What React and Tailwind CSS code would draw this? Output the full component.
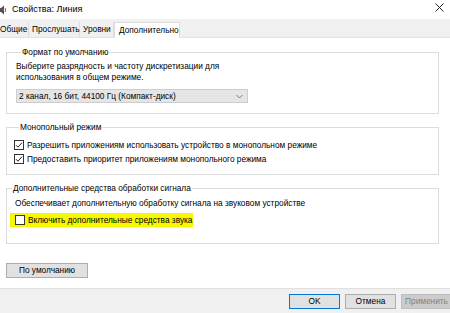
import React from 'react';

function Check({ checked }) {
  return (
    <span className="w-[10px] h-[10px] border border-[#333] bg-white flex items-center justify-center shrink-0">
      {checked && (
        <svg width="8" height="8" viewBox="0 0 8 8">
          <path d="M1 4.2 L3 6.2 L7 1.6" fill="none" stroke="#222" strokeWidth="1" />
        </svg>
      )}
    </span>
  );
}

function Frame({ title, className, children }) {
  return (
    <fieldset className={`border border-[#dcdcdc] mx-0 shrink-0 ${className}`}>
      <legend className="ml-[5px] px-px leading-[10px]">{title}</legend>
      {children}
    </fieldset>
  );
}

export default function App() {
  const tabs = ['Общие', 'Прослушать', 'Уровни'];

  return (
    <div className="w-[450px] h-[313px] bg-white flex flex-col overflow-hidden text-[8.3px] text-black" style={{ fontFamily: '"Liberation Sans", Arial, sans-serif' }}>
      {/* Title bar */}
      <div className="h-[19px] flex items-center shrink-0">
        <svg width="9" height="10" viewBox="0 0 9 10" className="-ml-[2px] mr-[5px]">
          <path d="M0 3 L3 3 L6 0.5 L6 9.5 L3 7 L0 7 Z" fill="#555" />
          <path d="M7 3 Q8.5 5 7 7" fill="none" stroke="#d04a2a" strokeWidth="1" />
        </svg>
        <span className="text-[9px]">Свойства: Линия</span>
        <div className="flex-1" />
        <svg width="9" height="9" viewBox="0 0 9 9" className="mr-[6px] -mt-[4px]">
          <path d="M0.5 0.5 L8.5 8.5 M8.5 0.5 L0.5 8.5" stroke="#222" strokeWidth="1" />
        </svg>
      </div>

      {/* Tabs */}
      <div className="h-[19px] bg-[#f0f0f0] flex items-end shrink-0 border-b border-[#e3e3e3]">
        <div className="h-[15px] w-[29px] flex items-center border-r border-[#dcdcdc]">Общие</div>
        <div className="h-[15px] w-[51px] pl-[3px] flex items-center border-r border-[#dcdcdc]">Прослушать</div>
        <div className="h-[15px] w-[34px] pl-[3px] flex items-center border-r border-[#dcdcdc]">Уровни</div>
        <div className="h-[16px] w-[66px] pl-[4px] flex items-center bg-white border border-b-0 border-[#dcdcdc] -mb-px">
          Дополнительно
        </div>
      </div>

      {/* Content */}
      <div className="flex-1 flex flex-col pl-[6px] pr-[11px] pt-[9px]">
        <Frame title="Формат по умолчанию" className="h-[67px] px-[9px] pt-[4px]">
          <p className="leading-[11px]">
            Выберите разрядность и частоту дискретизации для
            <br />
            использования в общем режиме.
          </p>
          <div className="mt-[6px] w-[232px] h-[14px] bg-[#e5e5e5] border border-[#cdcdcd] flex items-center px-[2px]">
            <span className="flex-1">2 канал, 16 бит, 44100 Гц (Компакт-диск)</span>
            <svg width="7" height="5" viewBox="0 0 7 5" className="mr-[2px]">
              <path d="M0.5 1 L3.5 4 L6.5 1" fill="none" stroke="#666" strokeWidth="0.8" />
            </svg>
          </div>
        </Frame>

        <Frame title="Монопольный режим" className="mt-[8px] h-[53px] px-[7px] pt-[7px]">
          <div className="flex items-center gap-[3px] h-[12px]">
            <Check checked />
            <span>Разрешить приложениям использовать устройство в монопольном режиме</span>
          </div>
          <div className="flex items-center gap-[3px] h-[12px] mt-[2px]">
            <Check checked />
            <span>Предоставить приоритет приложениям монопольного режима</span>
          </div>
        </Frame>

        <Frame title="Дополнительные средства обработки сигнала" className="mt-[8px] h-[61px] pt-[5px]">
          <p className="pl-[8px] leading-[11px]">Обеспечивает дополнительную обработку сигнала на звуковом устройстве</p>
          <div className="mt-[4px] ml-[3px] w-[183px] h-[14px] bg-[#f7f700] flex items-center gap-[3px] pl-[5px]">
            <Check />
            <span>Включить дополнительные средства звука</span>
          </div>
        </Frame>

        <button className="mt-[19px] w-[82px] h-[15px] bg-[#e1e1e1] border border-[#adadad] flex items-center justify-center shrink-0">
          По умолчанию
        </button>
      </div>

      {/* Footer */}
      <div className="h-[25px] bg-[#f0f0f0] border-t border-[#dfdfdf] flex items-center justify-end gap-[5px] shrink-0 -mr-[2px]">
        <button className="w-[51px] h-[15px] bg-[#e1e1e1] border border-[#0078d7] flex items-center justify-center">OK</button>
        <button className="w-[51px] h-[15px] bg-[#e1e1e1] border border-[#adadad] flex items-center justify-center">Отмена</button>
        <button className="w-[51px] h-[15px] bg-[#cccccc] border border-[#bfbfbf] text-[#838383] flex items-center justify-center">Применить</button>
      </div>
    </div>
  );
}
